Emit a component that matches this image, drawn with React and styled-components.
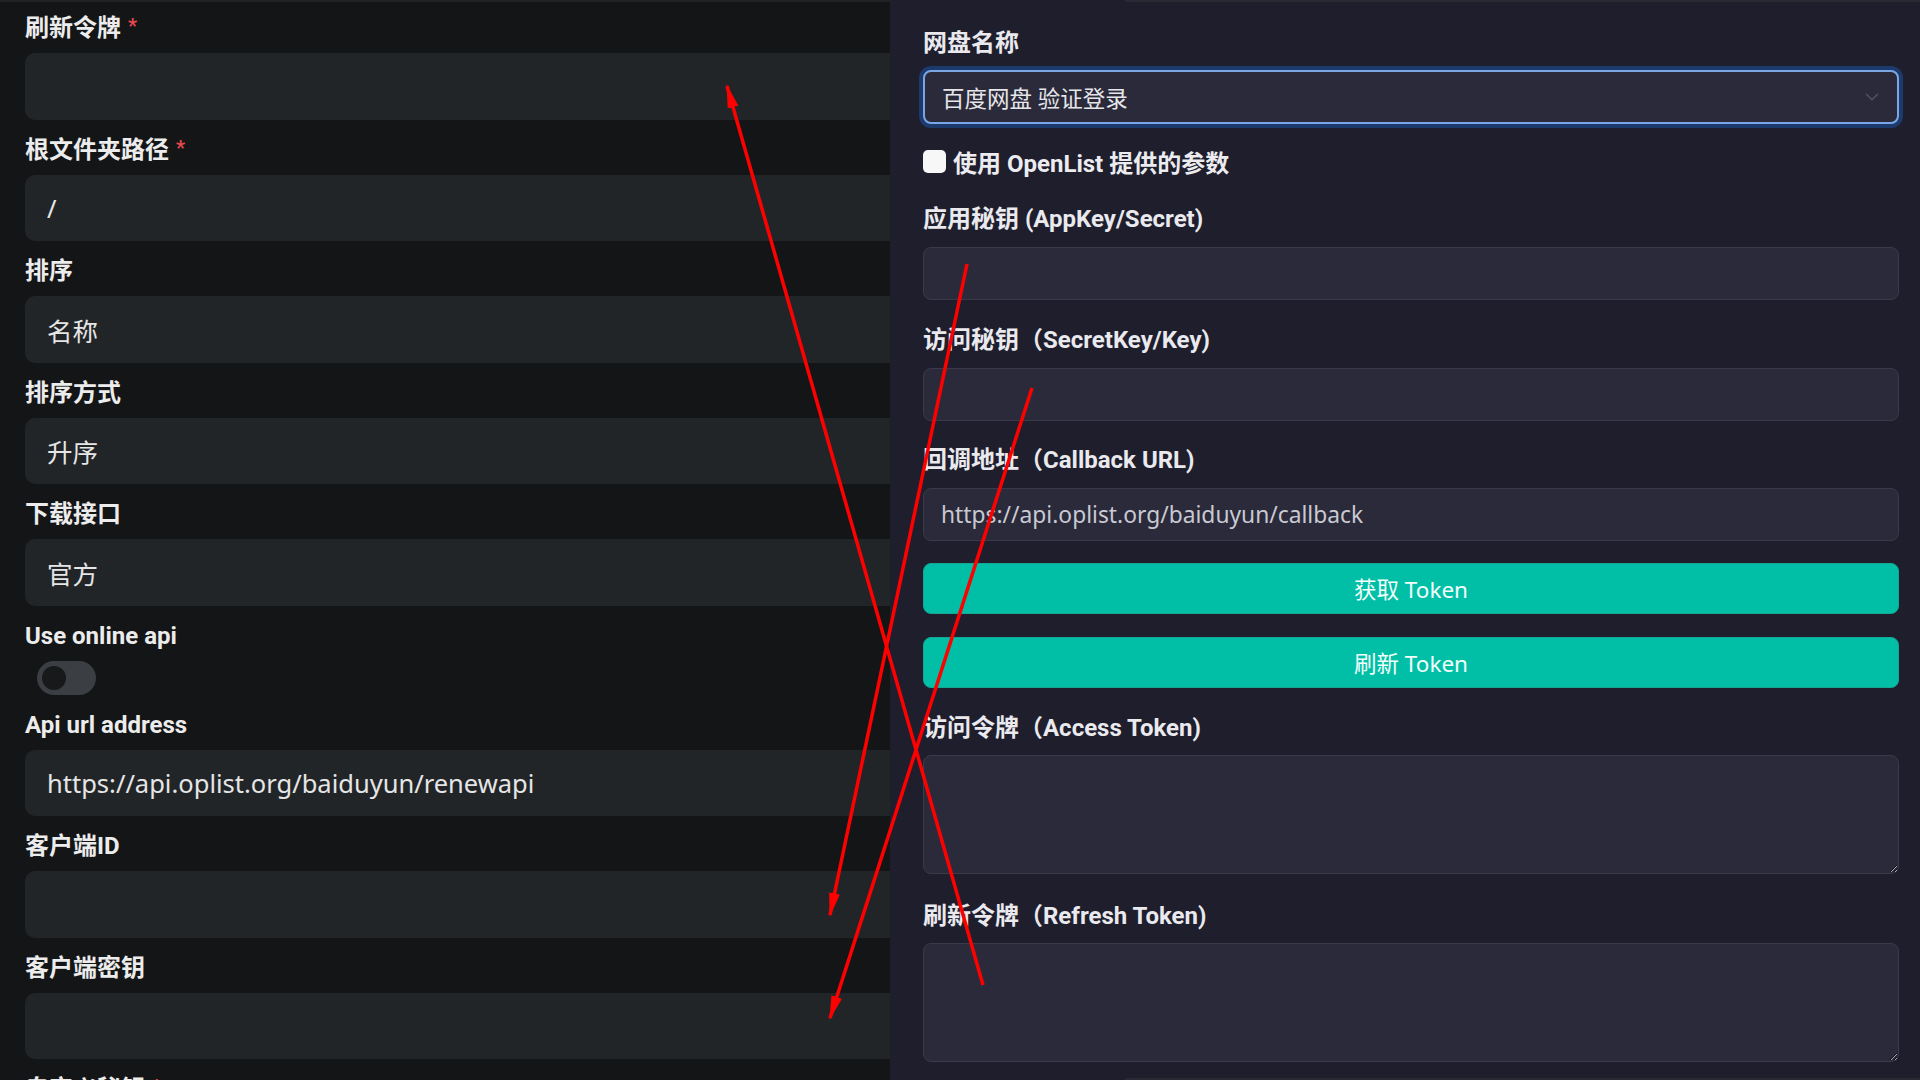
import React from 'react'
import styled, { createGlobalStyle } from 'styled-components'
import { ChevronDown } from 'lucide-react'

const GlobalStyle = createGlobalStyle`
  html, body { margin: 0; padding: 0; background: #141517; }
  body { font-family: "Noto Sans", "Noto Sans CJK SC", sans-serif; overflow: hidden; }
  * { box-sizing: border-box; }
  input, textarea, button { font: inherit; }
`

const leftFields = [
  { label: '刷新令牌', required: true, value: '' },
  { label: '根文件夹路径', required: true, value: '/' },
  { label: '排序', value: '名称' },
  { label: '排序方式', value: '升序' },
  { label: '下载接口', value: '官方' },
]

const leftFieldsAfter = [
  { label: 'Api url address', value: 'https://api.oplist.org/baiduyun/renewapi' },
  { label: '客户端ID', value: '' },
  { label: '客户端密钥', value: '' },
  { label: '自定义秘钥', required: true, value: '' },
]

const App = () => {
  return (
    <>
      <GlobalStyle />
      <Page>
        <LeftPanel>
          {leftFields.map((f) => (
            <LeftField key={f.label}>
              <LeftLabel>
                {f.label}
                {f.required && <Star>*</Star>}
              </LeftLabel>
              <LeftInput defaultValue={f.value} />
            </LeftField>
          ))}
          <LeftField>
            <LeftLabel>Use online api</LeftLabel>
            <Switch>
              <Knob />
            </Switch>
          </LeftField>
          {leftFieldsAfter.map((f) => (
            <LeftField key={f.label}>
              <LeftLabel>
                {f.label}
                {f.required && <Star>*</Star>}
              </LeftLabel>
              <LeftInput defaultValue={f.value} />
            </LeftField>
          ))}
        </LeftPanel>

        <RightPanel>
          <RightLabel>网盘名称</RightLabel>
          <SelectBox>
            <span>百度网盘 验证登录</span>
            <ChevronDown size={22} strokeWidth={1.6} color="#4d5264" />
          </SelectBox>

          <CheckRow>
            <CheckBox />
            <CheckText>使用 OpenList 提供的参数</CheckText>
          </CheckRow>

          <RightField $mt={28}>
            <RightLabel>应用秘钥 (AppKey/Secret)</RightLabel>
            <RightInput defaultValue="" />
          </RightField>
          <RightField $mt={25}>
            <RightLabel>访问秘钥（SecretKey/Key)</RightLabel>
            <RightInput defaultValue="" />
          </RightField>
          <RightField $mt={24}>
            <RightLabel>回调地址（Callback URL)</RightLabel>
            <RightInput defaultValue="https://api.oplist.org/baiduyun/callback" $dim />
          </RightField>

          <TokenButton $mt={22}>获取 Token</TokenButton>
          <TokenButton $mt={23}>刷新 Token</TokenButton>

          <RightField $mt={25}>
            <RightLabel>访问令牌（Access Token)</RightLabel>
            <TokenArea />
          </RightField>
          <RightField $mt={27}>
            <RightLabel>刷新令牌（Refresh Token)</RightLabel>
            <TokenArea />
          </RightField>
        </RightPanel>
      </Page>

      <Arrows viewBox="0 0 1920 1080">
        <defs>
          <marker
            id="head"
            markerUnits="userSpaceOnUse"
            markerWidth="24"
            markerHeight="11"
            refX="22"
            refY="5.5"
            orient="auto"
          >
            <path d="M0 0 L24 5.5 L0 11 Z" fill="#ff0000" />
          </marker>
        </defs>
        <line x1="983" y1="985" x2="727" y2="86" stroke="#ff0000" strokeWidth="3.5" markerEnd="url(#head)" />
        <line x1="967" y1="264" x2="830" y2="915" stroke="#ff0000" strokeWidth="3.5" markerEnd="url(#head)" />
        <line x1="1032" y1="388" x2="830" y2="1018" stroke="#ff0000" strokeWidth="3.5" markerEnd="url(#head)" />
      </Arrows>
    </>
  )
}

export default App

const Page = styled.div`
  display: flex;
  width: 1920px;
  height: 1080px;
  overflow: hidden;
`

const LeftPanel = styled.div`
  width: 890px;
  flex-shrink: 0;
  height: 100%;
  overflow: hidden;
  background: #141517;
  border-top: 2px solid #202226;
  padding: 10px 0 0 25px;
  display: flex;
  flex-direction: column;
  gap: 14px;
`

const LeftField = styled.div`
  display: flex;
  flex-direction: column;
  gap: 9px;
`

const LeftLabel = styled.div`
  height: 32px;
  font-family: Roboto, "Noto Sans CJK SC", sans-serif;
  font-weight: 700;
  font-size: 24px;
  line-height: 32px;
  color: #ececec;
  white-space: nowrap;
`

const Star = styled.span`
  color: #e5484d;
  font-size: 20px;
  line-height: 0;
  margin-left: 7px;
  vertical-align: 3px;
`

const LeftInput = styled.input`
  width: calc(100% + 60px);
  height: 66.5px;
  border: none;
  outline: none;
  border-radius: 10px;
  background: #222528;
  color: #e6e6e6;
  font-size: 25.5px;
  padding: 0 22px;
`

const Switch = styled.div`
  width: 59px;
  height: 34px;
  margin-left: 12px;
  border-radius: 17px;
  background: #3b3e42;
  display: flex;
  align-items: center;
  padding-left: 5px;
`

const Knob = styled.div`
  width: 24px;
  height: 24px;
  border-radius: 50%;
  background: #18191b;
`

const RightPanel = styled.div`
  position: relative;
  flex: 1;
  height: 100%;
  background: #1e1e2d;
  padding: 28px 21px 0 33px;
  display: flex;
  flex-direction: column;

  &::before,
  &::after {
    content: '';
    position: absolute;
    left: 235px;
    right: 0;
    height: 2px;
    background: #2a2a35;
  }
  &::before { top: 0; }
  &::after { bottom: 0; }
`

const RightLabel = styled.div`
  font-family: Roboto, "Noto Sans CJK SC", sans-serif;
  font-weight: 700;
  font-size: 24px;
  line-height: 30px;
  height: 30px;
  color: #e9e9ee;
  margin-bottom: 13px;
  white-space: nowrap;
`

const SelectBox = styled.div`
  height: 54px;
  margin-top: -1px;
  border: 2px solid #7ba6e6;
  border-radius: 8px;
  box-shadow: 0 0 0 4px #1d3a6c;
  background: #2a2a3a;
  color: #e6e6ea;
  font-size: 22.5px;
  display: flex;
  align-items: center;
  justify-content: space-between;
  padding: 0 14px 0 17px;
`

const CheckRow = styled.div`
  margin-top: 22px;
  height: 30px;
  display: flex;
  align-items: center;
  gap: 7px;
`

const CheckBox = styled.div`
  width: 23px;
  height: 23px;
  border-radius: 5px;
  background: #f7f7f7;
`

const CheckText = styled.span`
  font-family: Roboto, "Noto Sans CJK SC", sans-serif;
  font-weight: 700;
  font-size: 24px;
  color: #ececf0;
  white-space: nowrap;
`

const RightField = styled.div`
  display: flex;
  flex-direction: column;
  margin-top: ${(p) => p.$mt}px;
`

const RightInput = styled.input`
  height: 53px;
  border: 1.5px solid #3a3a4b;
  border-radius: 8px;
  background: #2a2a3b;
  color: ${(p) => (p.$dim ? '#c9c9d2' : '#e6e6ea')};
  font-size: 22.8px;
  padding: 0 17px;
  outline: none;
`

const TokenButton = styled.button`
  height: 51px;
  margin-top: ${(p) => p.$mt}px;
  border: 1px solid #13a794;
  border-radius: 8px;
  background: #00bfa6;
  color: #f2fffc;
  font-size: 22.5px;
  cursor: pointer;
`

const TokenArea = styled.textarea`
  height: 119px;
  margin-top: -1px;
  border: 1.5px solid #3a3a4b;
  border-radius: 8px;
  background: #2a2a3b;
  color: #e6e6ea;
  font-size: 22.5px;
  padding: 12px 17px;
  outline: none;
  resize: vertical;
  color-scheme: dark;
`

const Arrows = styled.svg`
  position: fixed;
  left: 0;
  top: 0;
  width: 1920px;
  height: 1080px;
  pointer-events: none;
  z-index: 10;
`
